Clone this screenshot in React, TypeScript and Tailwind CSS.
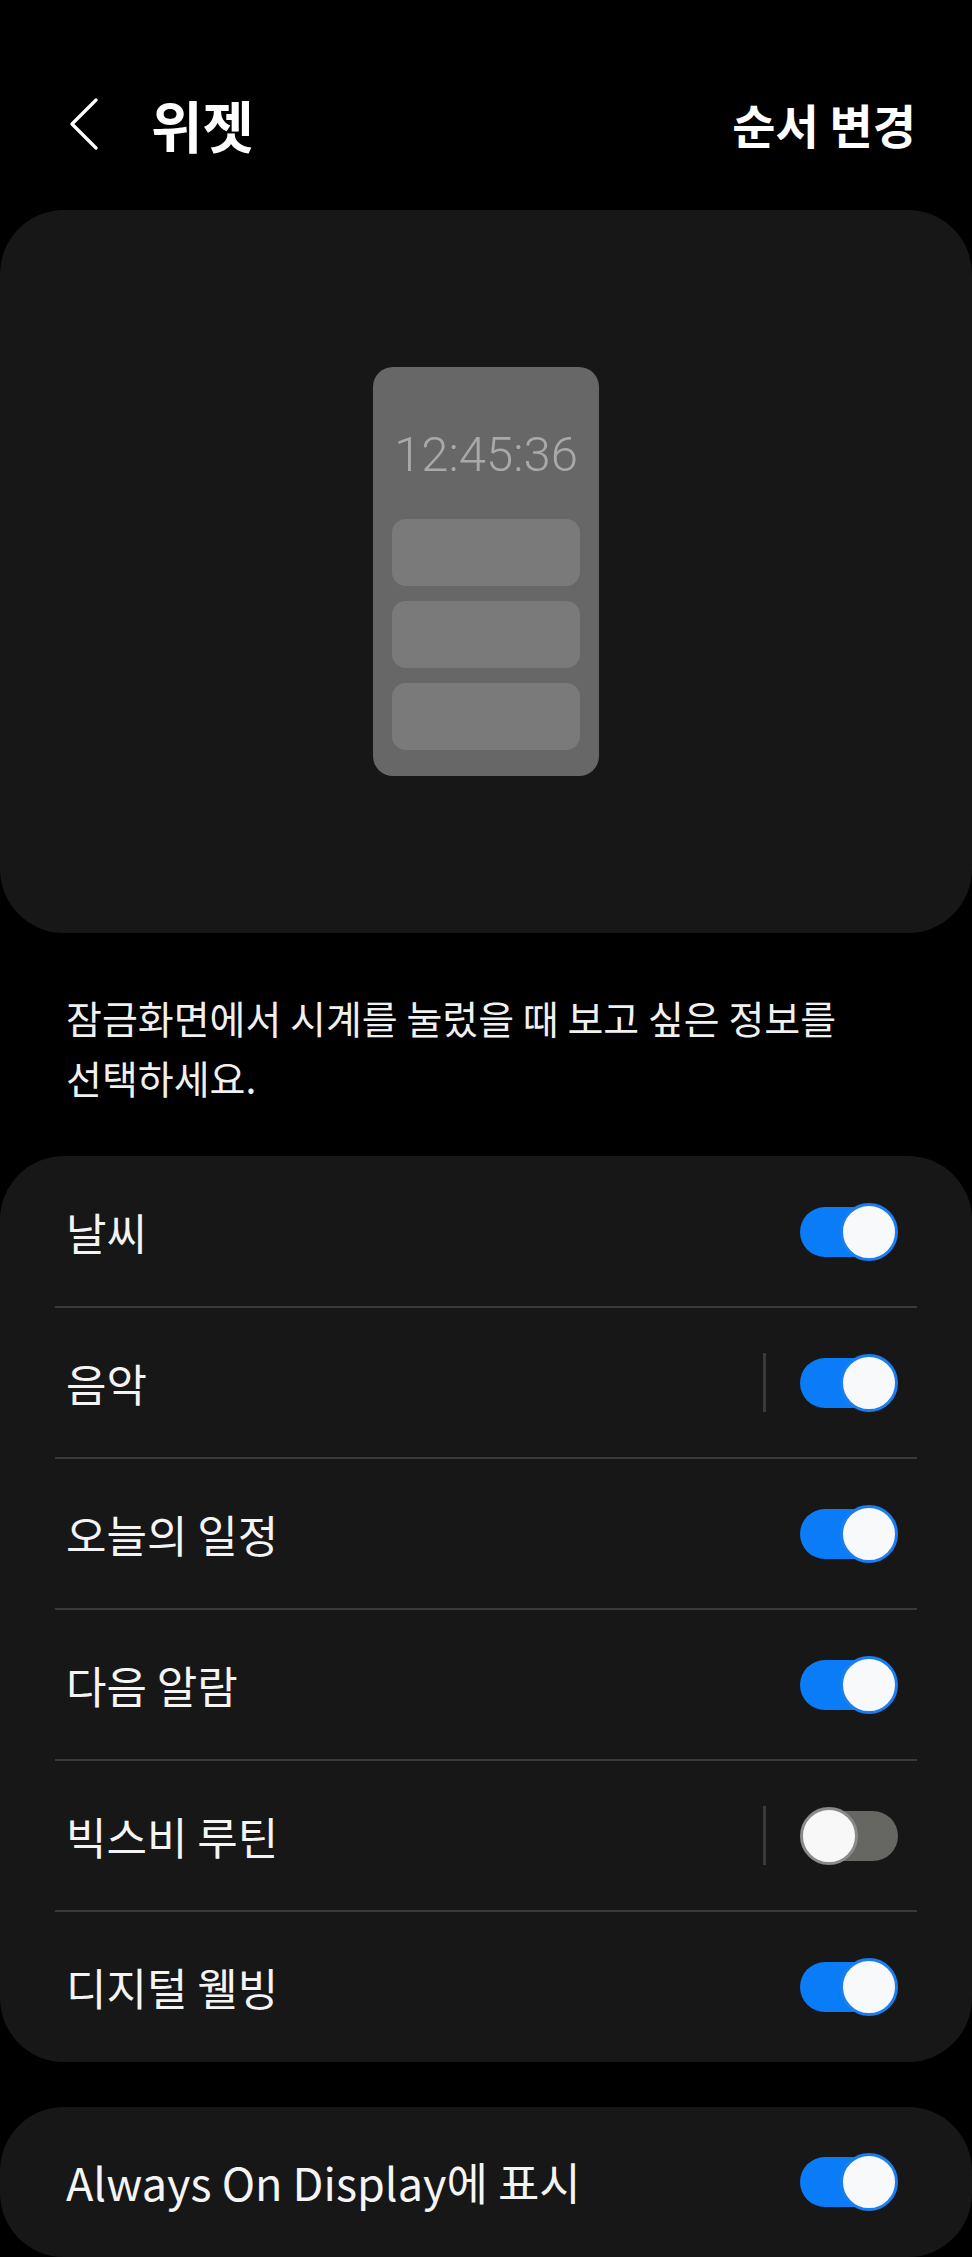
import React from 'react';

const font = { fontFamily: '"Noto Sans CJK KR", "Noto Sans", sans-serif' };

interface ToggleProps {
  on: boolean;
}

const Toggle: React.FC<ToggleProps> = ({ on }) => (
  <div className="relative w-[98px] h-[58px] shrink-0">
    <div
      className={
        on
          ? 'absolute left-0 right-[2px] top-[4px] bottom-[4px] rounded-full bg-[#0b7cf7]'
          : 'absolute left-[4px] right-0 top-[4px] bottom-[4px] rounded-full bg-[#666762]'
      }
    />
    <div
      className={
        on
          ? 'absolute right-0 top-0 w-[58px] h-[58px] rounded-full bg-[#f8f9fa] border-[3px] border-[#1a7ef0]'
          : 'absolute left-0 top-0 w-[58px] h-[58px] rounded-full bg-[#f8f8f8] border-[3px] border-[#8a8a8a]'
      }
    />
  </div>
);

interface RowProps {
  label: string;
  on: boolean;
  divider?: boolean;
}

const Row: React.FC<RowProps> = ({ label, on, divider }) => (
  <div className="flex items-center h-[149px] pl-[66px] pr-[74px]">
    <span className="flex-1 text-[44px] text-[#f4f4f4]">{label}</span>
    {divider && <div className="w-[3px] h-[59px] bg-[#3a3a3a] mr-[34px]" />}
    <Toggle on={on} />
  </div>
);

const rows: RowProps[] = [
  { label: '날씨', on: true },
  { label: '음악', on: true, divider: true },
  { label: '오늘의 일정', on: true },
  { label: '다음 알람', on: true },
  { label: '빅스비 루틴', on: false, divider: true },
  { label: '디지털 웰빙', on: true },
];

export default function App() {
  return (
    <div className="w-[972px] h-[2257px] bg-black overflow-hidden" style={font}>
      {/* header */}
      <div className="flex items-center h-[112px] mt-[68px] mb-[30px] pl-[69px] pr-[56px]">
        <svg width="30" height="52" viewBox="0 0 30 52" className="shrink-0">
          <polyline points="27,2 3,26 27,50" fill="none" stroke="#ffffff" strokeWidth="3.2" strokeLinejoin="round" strokeLinecap="round" />
        </svg>
        <h1 className="ml-[52px] flex-1 text-[56px] font-bold text-white">위젯</h1>
        <button className="text-[47px] font-bold text-white">순서 변경</button>
      </div>

      {/* preview */}
      <div className="h-[723px] rounded-[64px] bg-[#171717] flex items-center justify-center">
        <div className="w-[226px] h-[409px] rounded-[20px] bg-[#676767] flex flex-col items-center px-[19px]">
          <div
            className="mt-[46px] h-[84px] flex items-center text-[49px] font-light text-[#a9a9a9]"
            style={{ fontFamily: 'Roboto, "Liberation Sans", sans-serif' }}
          >
            12:45:36
          </div>
          <div className="mt-[22px] w-full flex flex-col gap-[15px]">
            <div className="h-[67px] rounded-[14px] bg-[#7a7a7a]" />
            <div className="h-[67px] rounded-[14px] bg-[#7a7a7a]" />
            <div className="h-[67px] rounded-[14px] bg-[#7a7a7a]" />
          </div>
        </div>
      </div>

      {/* description */}
      <p className="mt-[54px] mb-[49px] px-[66px] text-[39px] leading-[60px] text-[#f0f0f0]">
        잠금화면에서 시계를 눌렀을 때 보고 싶은 정보를
        <br />
        선택하세요.
      </p>

      {/* list */}
      <div className="rounded-[64px] bg-[#171717] py-[1px]">
        {rows.map((r, i) => (
          <React.Fragment key={r.label}>
            {i > 0 && <div className="mx-[55px] h-[2px] bg-[#3a3a3a]" />}
            <Row {...r} />
          </React.Fragment>
        ))}
      </div>

      {/* AOD */}
      <div className="mt-[45px] rounded-[64px] bg-[#171717]">
        <div className="flex items-center h-[150px] pl-[66px] pr-[74px]">
          <span className="flex-1 text-[45px] text-[#f4f4f4]">Always On Display에 표시</span>
          <Toggle on />
        </div>
      </div>
    </div>
  );
}
